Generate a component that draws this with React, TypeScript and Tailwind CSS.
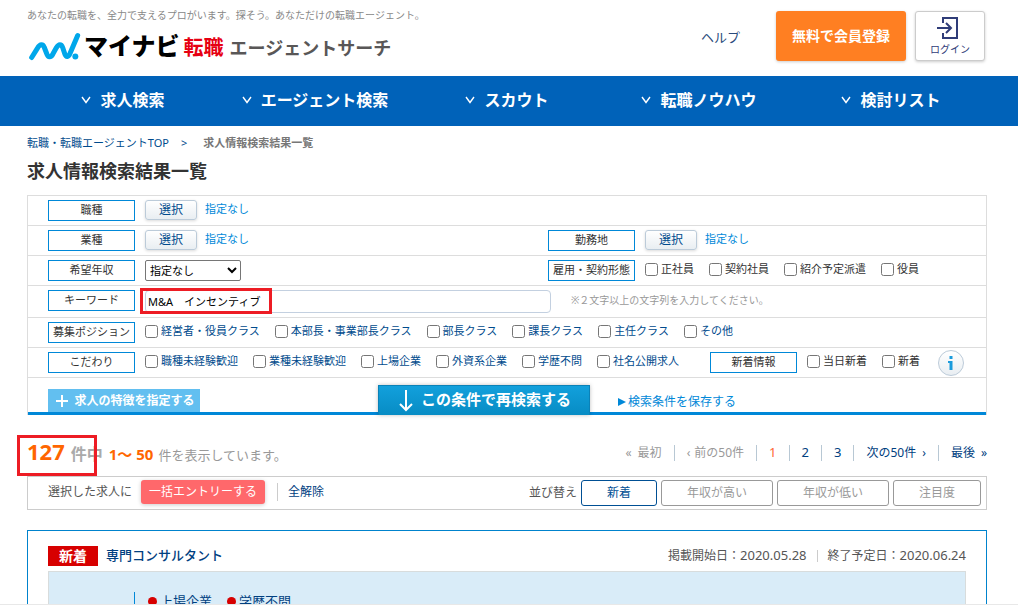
import React, { useState } from "react";

const navItems = [
  "求人検索",
  "エージェント検索",
  "スカウト",
  "転職ノウハウ",
  "検討リスト",
];

const employmentTypes = ["正社員", "契約社員", "紹介予定派遣", "役員"];

const positions = [
  "経営者・役員クラス",
  "本部長・事業部長クラス",
  "部長クラス",
  "課長クラス",
  "主任クラス",
  "その他",
];

const preferences = [
  "職種未経験歓迎",
  "業種未経験歓迎",
  "上場企業",
  "外資系企業",
  "学歴不問",
  "社名公開求人",
];

const arrivals = ["当日新着", "新着"];

const sortOptions = [
  { label: "新着", width: "w-[76px]" },
  { label: "年収が高い", width: "w-[112px]" },
  { label: "年収が低い", width: "w-[112px]" },
  { label: "注目度", width: "w-[88px]" },
];

const FieldLabel: React.FC<{ text: string; htmlFor?: string }> = ({
  text,
  htmlFor,
}) => {
  const className =
    "block w-[87px] h-[21px] shrink-0 border border-[#0088d8] text-center text-[11px] leading-[18px] text-[#333]";

  return htmlFor ? (
    <label htmlFor={htmlFor} className={className}>
      {text}
    </label>
  ) : (
    <span className={className}>{text}</span>
  );
};

const CheckItem: React.FC<{ text: string; link?: boolean }> = ({
  text,
  link,
}) => (
  <label
    className={`flex items-center gap-[3px] h-[18px] whitespace-nowrap text-[11px] leading-[18px] ${
      link ? "text-[#004b8d]" : "text-[#333]"
    }`}
  >
    <input type="checkbox" className="w-[13px] h-[13px] m-0" />
    {text}
  </label>
);

const SelectButton: React.FC = () => (
  <div className="flex items-start">
    <button
      type="button"
      className="w-[52px] h-5 rounded-[3px] border border-[#bccbd9] bg-linear-to-b from-white to-[#e9eef2] shadow-[0_1px_3px_rgba(0,0,0,0.15)] text-xs leading-[16px] text-[#004b8d]"
    >
      選択
    </button>
    <span className="ml-2 text-[11px] leading-[18px] text-[#0088d8]">
      指定なし
    </span>
  </div>
);

const Row: React.FC<{ children: React.ReactNode; tall?: boolean }> = ({
  children,
  tall,
}) => (
  <div
    className={`flex items-start border-b border-[#ddd] pl-5 pt-1 ${
      tall ? "h-8" : "h-[30px]"
    }`}
  >
    {children}
  </div>
);

const Separator: React.FC = () => <span className="w-px h-4 bg-[#b8c8d4]" />;

const Header: React.FC = () => (
  <header className="flex justify-between h-[76px] pl-[27px] pr-[33px]">
    <div className="pt-2">
      <p className="text-[10px] leading-[14px] text-[#888]">
        あなたの転職を、全力で支えるプロがいます。探そう。あなただけの転職エージェント。
      </p>
      <a href="#" className="flex items-center h-8 mt-2">
        <svg
          viewBox="86 90 156 86"
          className="w-[52px] h-[29px] ml-[2px]"
          fill="none"
          aria-hidden="true"
        >
          <path
            d="M94 166L112 137C119 125 128 125 132 136L139 154C143 167 152 167 158 155L168 137C175 125 183 125 187 136L193 154C197 167 205 165 209 154L232 100"
            stroke="#00a7ea"
            strokeWidth="15"
            strokeLinecap="round"
            strokeLinejoin="round"
          />
          <circle cx="225" cy="163" r="9" fill="#00a7ea" />
        </svg>
        <span className="ml-[3px] text-[24px] font-black text-black">
          マイナビ
        </span>
        <span className="ml-1 mt-1 text-[20px] font-bold text-[#e60012]">
          転職
        </span>
        <span className="ml-[6px] mt-1 text-[18px] font-bold text-[#595757]">
          エージェントサーチ
        </span>
      </a>
    </div>
    <div className="flex items-start pt-[11px]">
      <a
        href="#"
        className="mr-9 text-[13px] leading-[52px] text-[#2a4a7c]"
      >
        ヘルプ
      </a>
      <button
        type="button"
        className="w-[130px] h-[50px] rounded-[3px] bg-[#ff7f22] shadow-[0_1px_3px_rgba(0,0,0,0.2)] text-sm font-bold text-white"
      >
        無料で会員登録
      </button>
      <button
        type="button"
        className="ml-[9px] w-[70px] h-[50px] flex flex-col items-center rounded-[3px] border border-[#ccc] bg-white shadow-[0_1px_3px_rgba(0,0,0,0.2)] pt-1 text-[10px] leading-[18px] text-[#2f3c78]"
      >
        <svg
          viewBox="0 0 22 24"
          className="w-[22px] h-6 mr-1 shrink-0"
          fill="none"
          stroke="#2f3c78"
          strokeWidth="2"
          aria-hidden="true"
        >
          <path d="M6 7V2h14v20H6v-5M0 12h14M9 7l5 5l-5 5" />
        </svg>
        ログイン
      </button>
    </div>
  </header>
);

const GlobalNav: React.FC = () => (
  <nav className="h-[50px] bg-[#0062b9] pl-[27px] pr-[31px]">
    <ul className="grid grid-cols-5 h-full">
      {navItems.map((item) => (
        <li key={item} className="flex justify-center pb-[2px]">
          <a
            href="#"
            className="flex items-center gap-[9px] whitespace-nowrap text-base font-bold text-white"
          >
            <svg
              viewBox="0 0 10 8"
              className="w-[10px] h-2"
              fill="none"
              stroke="currentColor"
              strokeWidth="1.4"
              aria-hidden="true"
            >
              <path d="M1 1l4 5.500l4-5.500" />
            </svg>
            {item}
          </a>
        </li>
      ))}
    </ul>
  </nav>
);

const SearchForm: React.FC = () => {
  const [keyword, setKeyword] = useState<string>("M&A　インセンティブ");

  return (
    <form
      className="border border-b-0 border-[#ddd]"
      onSubmit={(e) => e.preventDefault()}
    >
      <Row>
        <FieldLabel text="職種" />
        <div className="ml-[10px]">
          <SelectButton />
        </div>
      </Row>
      <Row>
        <div className="flex w-[500px]">
          <FieldLabel text="業種" />
          <div className="ml-[10px]">
            <SelectButton />
          </div>
        </div>
        <FieldLabel text="勤務地" />
        <div className="ml-[10px]">
          <SelectButton />
        </div>
      </Row>
      <Row>
        <div className="flex w-[500px]">
          <FieldLabel text="希望年収" htmlFor="income" />
          <select
            id="income"
            className="ml-[10px] w-24 h-[21px] rounded-[2px] border border-[#767676] bg-white text-[11px] text-black"
          >
            <option>指定なし</option>
          </select>
        </div>
        <FieldLabel text="雇用・契約形態" />
        <div className="flex gap-[15px] ml-[10px]">
          {employmentTypes.map((type) => (
            <CheckItem key={type} text={type} />
          ))}
        </div>
      </Row>
      <Row tall>
        <FieldLabel text="キーワード" htmlFor="keyword" />
        <div className="relative ml-[10px] w-[406px]">
          <input
            id="keyword"
            type="text"
            value={keyword}
            onChange={(e) => setKeyword(e.target.value)}
            className="block w-full h-[23px] rounded-[4px] border border-[#c3d0e0] px-[2px] pb-[2px] text-[11px] text-black"
          />
          <span className="absolute -left-[5px] -top-[2px] w-[132px] h-[26px] border-3 border-[#ed1c24] pointer-events-none" />
        </div>
        <p className="ml-5 text-[10px] leading-[20px] text-[#999]">
          ※２文字以上の文字列を入力してください。
        </p>
      </Row>
      <Row>
        <FieldLabel text="募集ポジション" />
        <div className="flex gap-[15px] ml-[10px]">
          {positions.map((position) => (
            <CheckItem key={position} text={position} link />
          ))}
        </div>
      </Row>
      <Row>
        <FieldLabel text="こだわり" />
        <div className="flex gap-[15px] ml-[10px] mr-[31px]">
          {preferences.map((preference) => (
            <CheckItem key={preference} text={preference} link />
          ))}
        </div>
        <FieldLabel text="新着情報" />
        <div className="flex gap-[15px] ml-[10px]">
          {arrivals.map((arrival) => (
            <CheckItem key={arrival} text={arrival} />
          ))}
        </div>
        <button
          type="button"
          aria-label="新着情報について"
          className="ml-[18px] -mt-[2px] w-[26px] h-[26px] shrink-0 flex items-center justify-center rounded-full border border-[#bccbd9] bg-linear-to-b from-white to-[#e9eef2]"
        >
          <svg viewBox="0 0 6 14" className="w-[6px] h-[14px]" fill="#1a9bdc">
            <path d="M1.500 0h3v3h-3zM0 5h4.500v9h-3V7H0z" />
          </svg>
        </button>
      </Row>
      <div className="flex items-end h-[37px] pl-5 border-b-3 border-[#0088d8]">
        <button
          type="button"
          className="w-[152px] h-[23px] flex items-center justify-center gap-[6px] bg-[#62bff0] pl-[3px] text-xs font-bold text-white"
        >
          <svg
            viewBox="0 0 12 12"
            className="w-3 h-3"
            stroke="currentColor"
            strokeWidth="2"
            aria-hidden="true"
          >
            <path d="M6 0v12M0 6h12" />
          </svg>
          求人の特徴を指定する
        </button>
        <button
          type="submit"
          className="ml-[178px] -mb-[3px] w-[212px] h-[30px] flex items-center justify-center gap-2 border border-b-0 border-[#0a82b8] bg-linear-to-b from-[#12a0dc] to-[#078cc4] shadow-[0_0_4px_rgba(0,0,0,0.25)] pl-[2px] pb-1 text-[15px] leading-[24px] font-bold text-white"
        >
          <svg
            viewBox="0 0 14 22"
            className="w-[14px] h-[22px] mt-1"
            fill="none"
            stroke="currentColor"
            strokeWidth="2"
            aria-hidden="true"
          >
            <path d="M7 0v20M1 14l6 6l6-6" />
          </svg>
          この条件で再検索する
        </button>
        <a
          href="#"
          className="flex items-center gap-[2px] ml-7 text-xs leading-[20px] text-[#0088d8]"
        >
          <svg
            viewBox="0 0 8 8"
            className="w-2 h-2"
            fill="currentColor"
            aria-hidden="true"
          >
            <path d="M0 0l8 4l-8 4z" />
          </svg>
          検索条件を保存する
        </a>
      </div>
    </form>
  );
};

const Pager: React.FC = () => (
  <nav className="flex items-center gap-3 h-[22px] mt-1 text-xs text-[#004080]">
    <span className="flex gap-[6px] text-[#999]">
      <span>«</span>最初
    </span>
    <Separator />
    <span className="flex gap-1 text-[#999]">
      <span>‹</span>前の50件
    </span>
    <Separator />
    <span className="text-[13px] text-[#ff6633]">1</span>
    <Separator />
    <a href="#" className="text-[13px]">
      2
    </a>
    <Separator />
    <a href="#" className="text-[13px]">
      3
    </a>
    <Separator />
    <a href="#" className="flex gap-[6px]">
      次の50件<span>›</span>
    </a>
    <Separator />
    <a href="#" className="flex gap-[6px]">
      最後<span>»</span>
    </a>
  </nav>
);

const ActionBar: React.FC = () => {
  const [sort, setSort] = useState<string>("新着");

  return (
    <div className="flex items-start justify-between h-[34px] border border-[#ccc] pl-5 pr-[5px] pt-[3px] text-xs text-[#555]">
      <div className="flex items-center h-6">
        <span>選択した求人に</span>
        <button
          type="button"
          className="ml-[9px] w-[124px] h-6 rounded-[3px] bg-[#ff686b] shadow-[0_1px_4px_rgba(0,0,0,0.2)] text-white leading-[22px]"
        >
          一括エントリーする
        </button>
        <span className="ml-3 w-px h-[18px] bg-[#ccc]" />
        <a href="#" className="ml-[10px] text-[#004080]">
          全解除
        </a>
      </div>
      <div className="flex items-center gap-1">
        <span>並び替え</span>
        {sortOptions.map((option) => (
          <button
            key={option.label}
            type="button"
            onClick={() => setSort(option.label)}
            className={`h-[26px] rounded-[3px] border bg-white leading-[22px] ${
              option.width
            } ${
              sort === option.label
                ? "border-[#004f94] text-[#004f94]"
                : "border-[#999] text-[#999]"
            }`}
          >
            {option.label}
          </button>
        ))}
      </div>
    </div>
  );
};

const JobCard: React.FC = () => (
  <article className="mt-5 border border-[#0083cd] px-5 pt-[15px]">
    <div className="flex items-center justify-between h-5">
      <div className="flex items-start">
        <span className="w-[50px] h-5 bg-[#d70000] text-center text-sm leading-[19px] font-bold text-white">
          新着
        </span>
        <h2 className="ml-2 text-[13px] leading-[18px] font-medium">
          <a href="#" className="text-[#004080]">
            専門コンサルタント
          </a>
        </h2>
      </div>
      <p className="flex items-center text-xs text-[#555]">
        掲載開始日：<span className="text-[13px]">2020.05.28</span>
        <span className="mx-[10px] w-px h-3 bg-[#ccc]" />
        終了予定日：<span className="text-[13px]">2020.06.24</span>
      </p>
    </div>
    <div className="mt-[5px] h-[200px] border border-[#d8dcdc] bg-[#d9ecf8] pl-[85px] pt-5">
      <ul className="flex gap-[15px] border-l border-[#0088d8] pl-[13px] text-[13px] leading-[18px] text-[#004080]">
        {["上場企業", "学歴不問"].map((tag) => (
          <li key={tag} className="flex items-center gap-[3px]">
            <span className="w-[9px] h-[9px] rounded-full bg-[#d70000]" />
            {tag}
          </li>
        ))}
      </ul>
    </div>
  </article>
);

const App: React.FC = () => {
  return (
    <div className="h-screen overflow-hidden border-b border-[#e8e8e8] bg-white font-['Noto_Sans','Noto_Sans_CJK_JP',sans-serif]">
      <Header />
      <GlobalNav />
      <main className="pl-[27px] pr-[31px]">
        <div className="flex pt-2 text-[11px] leading-[18px]">
          <a href="#" className="text-[#004b8d]">
            転職・転職エージェントTOP
          </a>
          <span className="ml-3 text-[#004b8d]">&gt;</span>
          <span className="ml-4 font-bold text-[#777]">
            求人情報検索結果一覧
          </span>
        </div>
        <h1 className="mt-[7px] mb-3 text-[18px] leading-[24px] font-bold text-[#333]">
          求人情報検索結果一覧
        </h1>
        <SearchForm />
        <div className="flex items-start justify-between h-[61px] pt-[23px]">
          <p className="relative flex items-baseline text-[13px] leading-[26px] text-[#999]">
            <b className="text-[22px] text-[#ff6600]">127</b>
            <b className="ml-[6px] text-base leading-[26px] text-[#aaa]">
              件中
            </b>
            <b className="ml-[6px] mr-[5px] text-[15px] text-[#ff6600]">
              1～ 50
            </b>
            件を表示しています。
            <span className="absolute -left-[10px] -top-[3px] w-20 h-[41px] border-3 border-[#ed1c24] pointer-events-none" />
          </p>
          <Pager />
        </div>
        <ActionBar />
        <JobCard />
      </main>
    </div>
  );
};

export default App;
